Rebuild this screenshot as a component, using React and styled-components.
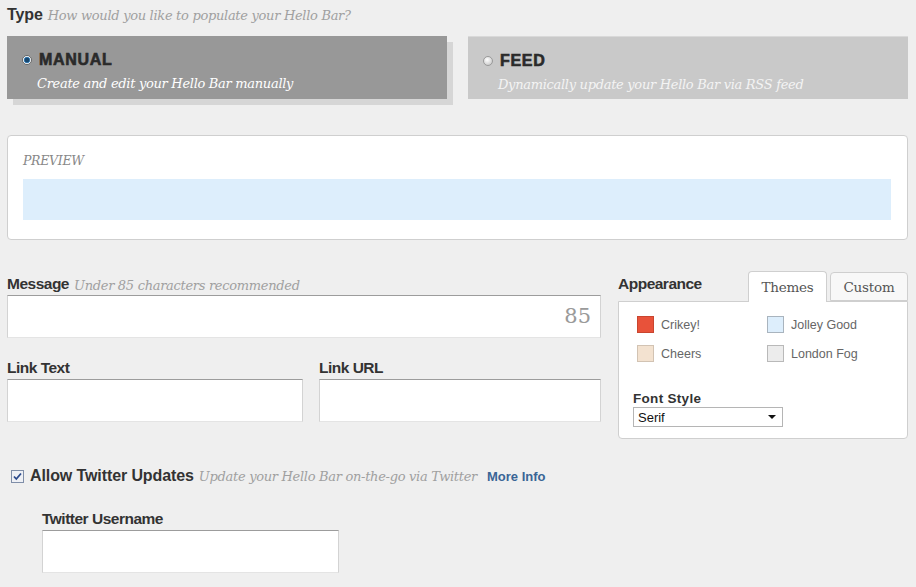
import React from "react";
import styled, { createGlobalStyle } from "styled-components";

const GlobalStyle = createGlobalStyle`
  html, body {
    margin: 0;
    padding: 0;
    background: #efefef;
  }
  body {
    font-family: "Liberation Sans", Arial, sans-serif;
    color: #333;
  }
`;

const Page = styled.div`
  width: 901px;
  padding: 6px 8px 0 7px;
`;

const HeadRow = styled.div`
  display: flex;
  align-items: baseline;
  gap: 5px;
`;

const Label = styled.span`
  font-weight: bold;
  font-size: ${(p) => p.size || 15.5}px;
  letter-spacing: ${(p) => (p.size ? "-0.1px" : "-0.5px")};
  color: #333;
`;

const Hint = styled.span`
  font-family: "DejaVu Serif", Georgia, serif;
  font-style: italic;
  font-size: 13px;
  color: #a0a0a0;
  letter-spacing: -0.3px;
`;

const Cards = styled.div`
  display: grid;
  grid-template-columns: 440px 440px;
  gap: 21px;
  margin-top: 12px;
`;

const Card = styled.div`
  height: 63px;
  box-sizing: border-box;
  padding: 15px 0 0 15px;
  background: ${(p) => (p.active ? "#989898" : "#c9c9c9")};
  box-shadow: ${(p) => (p.active ? "6px 6px 0 #d6d6d6" : "none")};
  border-top: ${(p) => (p.active ? "none" : "1px solid #d9d9d9")};
`;

const CardTitle = styled.div`
  display: flex;
  align-items: center;
  gap: 7px;
  font-weight: bold;
  font-size: 16px;
  letter-spacing: 0.7px;
  color: #2a2a2a;
  -webkit-text-stroke: 0.6px #2a2a2a;
`;

const Radio = styled.span`
  width: 10px;
  height: 10px;
  border-radius: 50%;
  box-sizing: border-box;
  ${(p) =>
    p.checked
      ? `background: radial-gradient(circle at 50% 50%, #16466e 0 2px, #4f95cc 3px, #ffffff 3.6px);
         border: 1px solid #6a6a6a;`
      : `background: radial-gradient(circle at 40% 35%, #ffffff, #d2d2d2 70%, #aaaaaa);
         border: 1px solid #9a9a9a;`}
`;

const CardText = styled.div`
  margin: 7px 0 0 15px;
  font-family: "DejaVu Serif", Georgia, serif;
  font-style: italic;
  font-size: 13px;
  letter-spacing: -0.3px;
  color: ${(p) => (p.active ? "#ffffff" : "#f4f4f4")};
`;

const PreviewBox = styled.div`
  margin-top: 36px;
  height: 105px;
  box-sizing: border-box;
  background: #fff;
  border: 1px solid #cfcfcf;
  border-radius: 4px;
  padding: 17px 16px 0 15px;
`;

const PreviewTitle = styled.div`
  font-family: "DejaVu Serif", Georgia, serif;
  font-style: italic;
  font-size: 12.5px;
  color: #888;
  letter-spacing: -0.3px;
`;

const PreviewBar = styled.div`
  margin-top: 11px;
  height: 41px;
  background: #ddeefc;
`;

const FormGrid = styled.div`
  display: grid;
  grid-template-columns: 594px 290px;
  gap: 17px;
  margin-top: 31px;
`;

const Col = styled.div`
  display: flex;
  flex-direction: column;
`;

const FieldHead = styled(HeadRow)`
  height: 22px;
  align-items: flex-end;
  margin-top: ${(p) => p.top || 0}px;
  margin-bottom: 2px;
`;

const Input = styled.div`
  position: relative;
  height: 43px;
  box-sizing: border-box;
  background: #fff;
  border: 1px solid #d3d3d3;
  border-top-color: #9c9c9c;
  border-bottom-color: #e4e4e4;
  width: ${(p) => (p.w ? p.w + "px" : "auto")};
`;

const Counter = styled.span`
  position: absolute;
  right: 9px;
  top: 8px;
  font-family: "DejaVu Serif", Georgia, serif;
  font-size: 21px;
  color: #9a9a9a;
`;

const LinkRow = styled.div`
  display: grid;
  grid-template-columns: 296px 282px;
  gap: 16px;
`;

const TabHead = styled.div`
  display: flex;
  align-items: flex-end;
  height: 34px;
  margin-top: -4px;
`;

const AppearanceLabel = styled(Label)`
  flex: 1;
  padding-bottom: 8px;
`;

const Tab = styled.div`
  box-sizing: border-box;
  height: ${(p) => (p.active ? 31 : 29)}px;
  width: ${(p) => p.w}px;
  margin-left: ${(p) => p.gap || 0}px;
  margin-bottom: ${(p) => (p.active ? -1 : 0)}px;
  display: flex;
  align-items: center;
  justify-content: center;
  font-family: "DejaVu Serif", Georgia, serif;
  font-size: 13.5px;
  letter-spacing: -0.2px;
  color: #555;
  background: ${(p) => (p.active ? "#fff" : "#f8f8f8")};
  border: 1px solid #cfcfcf;
  border-bottom: ${(p) => (p.active ? "none" : "1px solid #cfcfcf")};
  border-radius: 4px 4px 0 0;
  position: relative;
  z-index: ${(p) => (p.active ? 2 : 0)};
`;

const Panel = styled.div`
  height: 138px;
  box-sizing: border-box;
  background: #fff;
  border: 1px solid #cfcfcf;
  border-radius: 0 0 4px 4px;
  padding: 14px 0 0 14px;
  position: relative;
  z-index: 1;
`;

const Swatches = styled.div`
  display: grid;
  grid-template-columns: 130px 130px;
  row-gap: 12px;
  padding-left: 4px;
`;

const Theme = styled.div`
  display: flex;
  align-items: center;
  gap: 7px;
  font-size: 12.5px;
  color: #666;
`;

const Swatch = styled.span`
  width: 17px;
  height: 17px;
  box-sizing: border-box;
  background: ${(p) => p.color};
  border: 1px solid ${(p) => p.edge};
`;

const FontLabel = styled.div`
  margin-top: 29px;
  font-weight: bold;
  font-size: 13.5px;
  letter-spacing: 0.3px;
  color: #333;
`;

const Select = styled.div`
  margin-top: 1px;
  width: 150px;
  height: 20px;
  box-sizing: border-box;
  border: 1px solid #b5b5b5;
  background: #fff;
  display: flex;
  align-items: center;
  justify-content: space-between;
  padding: 0 6px 0 4px;
  font-size: 13px;
  color: #111;
`;

const Caret = styled.span`
  width: 0;
  height: 0;
  border-left: 4px solid transparent;
  border-right: 4px solid transparent;
  border-top: 4px solid #111;
`;

const TwitterRow = styled.div`
  display: flex;
  align-items: center;
  gap: 6px;
  margin-top: 28px;
  padding-left: 4px;
`;

const MoreInfo = styled.a`
  font-weight: bold;
  font-size: 13px;
  color: #3a6596;
  text-decoration: none;
  margin-left: 4px;
`;

const TwitterField = styled.div`
  padding-left: 35px;
  margin-top: 21px;
`;

const themes = [
  { name: "Crikey!", color: "#e8523a", edge: "#c9452f" },
  { name: "Jolley Good", color: "#ddeefc", edge: "#a9b4be" },
  { name: "Cheers", color: "#f3e2d0", edge: "#d2c3b3" },
  { name: "London Fog", color: "#ececec", edge: "#b9b9b9" },
];

function Checkbox() {
  return (
    <svg width="13" height="13" viewBox="0 0 13 13">
      <rect x="0.5" y="0.5" width="12" height="12" fill="#eef0f5" stroke="#7f8ea8" />
      <path d="M3 6.5 L5.3 9 L10 3.5" fill="none" stroke="#2b4a8c" strokeWidth="1.8" />
    </svg>
  );
}

export default function App() {
  return (
    <>
      <GlobalStyle />
      <Page>
        <HeadRow>
          <Label size={16}>Type</Label>
          <Hint>How would you like to populate your Hello Bar?</Hint>
        </HeadRow>
        <Cards>
          <Card active>
            <CardTitle>
              <Radio checked />
              MANUAL
            </CardTitle>
            <CardText active>Create and edit your Hello Bar manually</CardText>
          </Card>
          <Card>
            <CardTitle>
              <Radio />
              FEED
            </CardTitle>
            <CardText>Dynamically update your Hello Bar via RSS feed</CardText>
          </Card>
        </Cards>

        <PreviewBox>
          <PreviewTitle>PREVIEW</PreviewTitle>
          <PreviewBar />
        </PreviewBox>

        <FormGrid>
          <Col>
            <FieldHead>
              <Label>Message</Label>
              <Hint>Under 85 characters recommended</Hint>
            </FieldHead>
            <Input>
              <Counter>85</Counter>
            </Input>
            <LinkRow>
              <Col>
                <FieldHead top={17}>
                  <Label>Link Text</Label>
                </FieldHead>
                <Input />
              </Col>
              <Col>
                <FieldHead top={17}>
                  <Label>Link URL</Label>
                </FieldHead>
                <Input />
              </Col>
            </LinkRow>
          </Col>
          <Col>
            <TabHead>
              <AppearanceLabel>Appearance</AppearanceLabel>
              <Tab active w={79}>Themes</Tab>
              <Tab w={78} gap={3}>Custom</Tab>
            </TabHead>
            <Panel>
              <Swatches>
                {themes.map((t) => (
                  <Theme key={t.name}>
                    <Swatch color={t.color} edge={t.edge} />
                    {t.name}
                  </Theme>
                ))}
              </Swatches>
              <FontLabel>Font Style</FontLabel>
              <Select>
                Serif
                <Caret />
              </Select>
            </Panel>
          </Col>
        </FormGrid>

        <TwitterRow>
          <Checkbox />
          <HeadRow>
            <Label size={16}>Allow Twitter Updates</Label>
            <Hint>Update your Hello Bar on-the-go via Twitter</Hint>
          </HeadRow>
          <MoreInfo href="#">More Info</MoreInfo>
        </TwitterRow>
        <TwitterField>
          <FieldHead>
            <Label>Twitter Username</Label>
          </FieldHead>
          <Input w={297} />
        </TwitterField>
      </Page>
    </>
  );
}
